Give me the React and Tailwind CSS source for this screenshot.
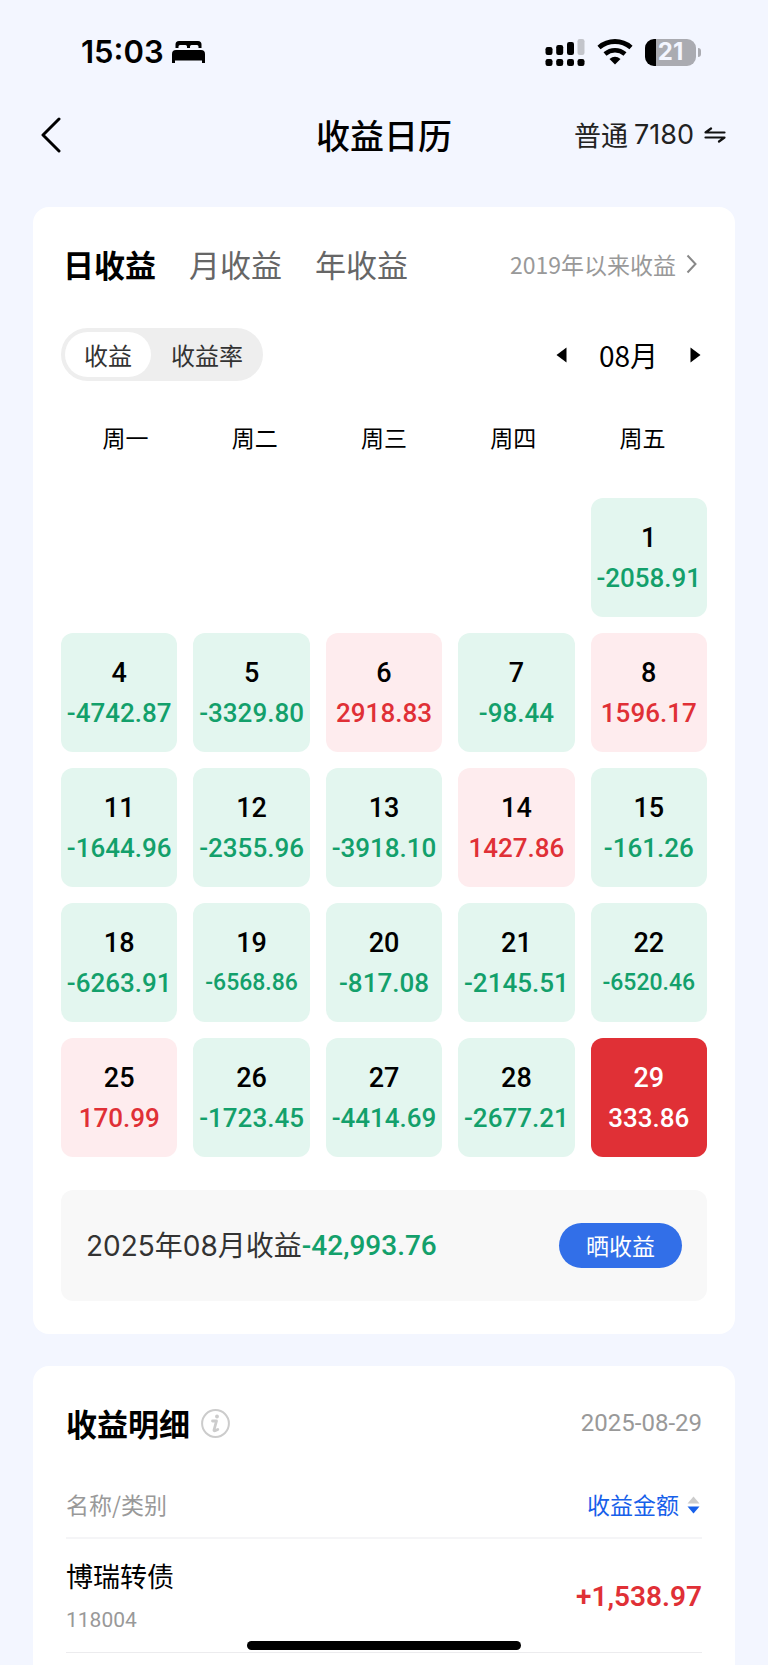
import React, { useState } from 'react';

const WEEKDAYS = ['周一', '周二', '周三', '周四', '周五'];

const DAYS = [
  { day: 1, amount: '-2058.91' },
  { day: 4, amount: '-4742.87' },
  { day: 5, amount: '-3329.80' },
  { day: 6, amount: '2918.83' },
  { day: 7, amount: '-98.44' },
  { day: 8, amount: '1596.17' },
  { day: 11, amount: '-1644.96' },
  { day: 12, amount: '-2355.96' },
  { day: 13, amount: '-3918.10' },
  { day: 14, amount: '1427.86' },
  { day: 15, amount: '-161.26' },
  { day: 18, amount: '-6263.91' },
  { day: 19, amount: '-6568.86', small: true },
  { day: 20, amount: '-817.08' },
  { day: 21, amount: '-2145.51' },
  { day: 22, amount: '-6520.46', small: true },
  { day: 25, amount: '170.99' },
  { day: 26, amount: '-1723.45' },
  { day: 27, amount: '-4414.69' },
  { day: 28, amount: '-2677.21' },
  { day: 29, amount: '333.86' },
];

const ROWS = [{ name: '博瑞转债', code: '118004', amount: '+1,538.97' }];

const TABS = ['日收益', '月收益', '年收益'];

function StatusBar() {
  return (
    <div className="flex h-[104px] items-center justify-between pl-[81px] pr-[67px]">
      <div className="flex items-center gap-2">
        <span className="font-['Inter',sans-serif] text-[31px] font-semibold leading-10">15:03</span>
        <svg width="33" height="24" viewBox="0 0 33 24" aria-hidden="true">
          <path d="M3.5 8V4.5Q3.5 1 7 1H26Q29.500 1 29.500 4.500V8H26.500V6.500Q26.500 5 25 5H19.500Q18 5 18 6.500V8H15V6.500Q15 5 13.500 5H8Q6.500 5 6.500 6.500V8Z" />
          <path d="M0 23V14Q0 10 4 10H29Q33 10 33 14V23H30V20.500H3V23Z" />
        </svg>
      </div>
      <div className="flex items-center gap-3">
        <svg width="40" height="28" viewBox="0 0 40 28" aria-hidden="true">
          <rect x="0.500" y="9" width="7" height="8" rx="2.200" />
          <rect x="11.200" y="7" width="7" height="10" rx="2.200" />
          <rect x="22" y="4" width="7" height="13" rx="2.200" />
          <rect x="32.500" y="1" width="7" height="16" rx="2.200" fill="#c3c5cb" />
          <rect x="0.500" y="21" width="7" height="7" rx="2.200" />
          <rect x="11.200" y="21" width="7" height="7" rx="2.200" />
          <rect x="22" y="21" width="7" height="7" rx="2.200" />
          <rect x="32.500" y="21" width="7" height="7" rx="2.200" />
        </svg>
        <svg width="36" height="26" viewBox="0 0 36 26" fill="none" stroke="#000" aria-hidden="true">
          <path d="M2 8.500Q9 2.500 18 2.500Q27 2.500 34 8.500" strokeWidth="4.800" />
          <path d="M8 15Q12.500 11.200 18 11.200Q23.500 11.200 28 15" strokeWidth="4.600" />
          <path d="M12.500 20Q18 15.500 23.500 20L18 25.500Z" fill="#000" stroke="none" />
        </svg>
        <div className="flex items-center gap-[2px]">
          <div className="flex h-[27px] w-[51px] items-center justify-center rounded-[9px] bg-[linear-gradient(to_right,#000_11px,#aaabb1_11px)] font-['Inter',sans-serif] text-2xl font-bold text-[#f3f6ff]">
            21
          </div>
          <div className="h-[9px] w-[3px] rounded-r-full bg-[#aaabb1]" />
        </div>
      </div>
    </div>
  );
}

function NavBar() {
  return (
    <header className="grid h-[62px] grid-cols-[1fr_auto_1fr] items-center px-10">
      <button aria-label="返回" className="w-6">
        <svg width="22" height="36" viewBox="0 0 22 36" fill="none" stroke="#000" strokeWidth="3" strokeLinecap="round" strokeLinejoin="round" aria-hidden="true">
          <path d="M19 2L3 18L19 34" />
        </svg>
      </button>
      <h1 className="text-[34px] font-medium leading-10">收益日历</h1>
      <button className="flex items-center gap-[10px] justify-self-end pr-[2px] text-[27px] leading-10 text-[#222]">
        <span className="flex items-center gap-[6px]">
          普通<span className="font-['Inter',sans-serif]">7180</span>
        </span>
        <svg width="22" height="16" viewBox="0 0 22 16" fill="none" stroke="#111" strokeWidth="2.200" strokeLinecap="round" strokeLinejoin="round" aria-hidden="true">
          <path d="M20.500 5.500H1.500L7 1.500" />
          <path d="M1.500 10.500H20.500L15 14.500" />
        </svg>
      </button>
    </header>
  );
}

function DayCell({ item, selected, onSelect }) {
  const loss = item.amount.startsWith('-');
  const bg = selected ? 'bg-[#e03036]' : loss ? 'bg-[#e3f6ef]' : 'bg-[#feecee]';
  const color = selected ? 'text-white' : loss ? 'text-[#13a06b]' : 'text-[#e03036]';

  return (
    <button
      onClick={() => onSelect(item.day)}
      className={`flex h-[119px] flex-col items-center justify-center rounded-xl font-['Roboto',sans-serif] font-medium ${bg} ${item.day === 1 ? 'col-start-5' : ''}`}
    >
      <span className={`text-[27px] leading-10 ${selected ? 'text-white' : 'text-black'}`}>{item.day}</span>
      <span className={`leading-10 ${item.small ? 'text-[23px]' : 'text-[26px]'} ${color}`}>{item.amount}</span>
    </button>
  );
}

export default function App() {
  const [tab, setTab] = useState('日收益');
  const [mode, setMode] = useState('收益');
  const [selectedDay, setSelectedDay] = useState(29);

  return (
    <div className="flex min-h-screen flex-col bg-[#f3f6ff] font-['Noto_Sans_CJK_SC',sans-serif] text-black">
      <StatusBar />
      <NavBar />

      <main className="flex flex-1 flex-col gap-8 px-[33px] pt-[41px]">
        {/* 收益日历 */}
        <section className="rounded-2xl bg-white px-7 pb-[33px] pt-[33px]">
          <div className="flex h-12 items-center justify-between pl-[2px]">
            <div className="flex gap-[33px]">
              {TABS.map((name) => (
                <button
                  key={name}
                  onClick={() => setTab(name)}
                  className={`text-[31px] leading-10 ${tab === name ? 'font-bold text-black' : 'text-[#666]'}`}
                >
                  {name}
                </button>
              ))}
            </div>
            <a href="#history" className="flex items-center gap-[10px] pr-[10px] text-[23px] leading-10 text-[#999]">
              2019年以来收益
              <svg width="11" height="20" viewBox="0 0 11 20" fill="none" stroke="#888" strokeWidth="2" aria-hidden="true">
                <path d="M1.500 1.500L9.500 10L1.500 18.500" />
              </svg>
            </a>
          </div>

          <div className="mt-10 flex h-[53px] items-center justify-between">
            <div className="flex h-full rounded-full bg-[#eee] p-1 text-[24px] text-[#333]">
              <button onClick={() => setMode('收益')} className={`rounded-full px-[19px] ${mode === '收益' ? 'bg-white' : ''}`}>收益</button>
              <button onClick={() => setMode('收益率')} className={`rounded-full pl-5 pr-4 ${mode === '收益率' ? 'bg-white' : ''}`}>收益率</button>
            </div>
            <div className="flex items-center gap-8 pr-[6px]">
              <button aria-label="上个月">
                <svg width="11" height="16" viewBox="0 0 11 16" aria-hidden="true">
                  <path d="M10.500 0.500V15.500L0.500 8Z" />
                </svg>
              </button>
              <span className="text-[28px] leading-10">08月</span>
              <button aria-label="下个月">
                <svg width="11" height="16" viewBox="0 0 11 16" aria-hidden="true">
                  <path d="M0.500 0.500V15.500L10.500 8Z" />
                </svg>
              </button>
            </div>
          </div>

          <div className="mt-9 grid grid-cols-5 text-center text-[23px] leading-10">
            {WEEKDAYS.map((name) => (
              <span key={name}>{name}</span>
            ))}
          </div>

          <div className="mt-[41px] grid grid-cols-5 gap-4">
            {DAYS.map((item) => (
              <DayCell key={item.day} item={item} selected={item.day === selectedDay} onSelect={setSelectedDay} />
            ))}
          </div>

          <div className="mt-[33px] flex h-[111px] items-center justify-between rounded-xl bg-[#f8f8f8] px-[25px]">
            <p className="flex items-center text-[28px] leading-10 text-[#333]">
              <span className="font-['Inter','Noto_Sans_CJK_SC',sans-serif]">2025年08月收益</span>
              <span className="font-['Roboto',sans-serif] font-medium text-[#13a06b]">-42,993.76</span>
            </p>
            <button className="h-[45px] rounded-full bg-[#326fe8] px-[27px] text-[23px] text-white">晒收益</button>
          </div>
        </section>

        {/* 收益明细 */}
        <section className="flex-1 rounded-t-2xl bg-white px-[33px] pt-[33px]">
          <div className="flex h-12 items-center justify-between">
            <div className="flex items-center gap-[11px]">
              <h2 className="text-[31px] font-bold leading-10">收益明细</h2>
              <button aria-label="说明">
                <svg width="29" height="29" viewBox="0 0 29 29" fill="none" stroke="#ccc" aria-hidden="true">
                  <circle cx="14.500" cy="14.500" r="13.400" strokeWidth="2" />
                  <circle cx="16" cy="7.500" r="1.900" fill="#ccc" stroke="none" />
                  <path d="M11.500 12H15.500L13 21Q12.800 22 14 21.700L16.800 20.500" strokeWidth="2.800" strokeLinecap="round" strokeLinejoin="round" />
                </svg>
              </button>
            </div>
            <time className="font-['Roboto',sans-serif] text-[24px] leading-10 text-[#999]">2025-08-29</time>
          </div>

          <table className="mt-[25px] w-full">
            <thead>
              <tr className="h-[66px] border-b-2 border-[#f5f5f7] text-[23px]">
                <th className="text-left font-normal text-[#999]">名称/类别</th>
                <th className="font-normal text-[#1760ea]">
                  <button className="ml-auto flex items-center gap-2 pr-[2px]">
                    收益金额
                    <svg width="13" height="18" viewBox="0 0 13 18" aria-hidden="true">
                      <path d="M6.500 0.500L12.500 7.500H0.500Z" fill="#ccc" />
                      <path d="M6.500 17.500L12.500 10.500H0.500Z" fill="#1760ea" />
                    </svg>
                  </button>
                </th>
              </tr>
            </thead>
            <tbody>
              {ROWS.map((row) => (
                <tr key={row.code} className="h-[114px] border-b border-[#ececee]">
                  <td className="pt-[6px]">
                    <div className="text-[27px] leading-[44px]">{row.name}</div>
                    <div className="font-['Roboto',sans-serif] text-[21px] leading-[44px] text-[#999]">{row.code}</div>
                  </td>
                  <td className="pt-1 text-right font-['Roboto',sans-serif] text-[28px] font-semibold text-[#e03036]">{row.amount}</td>
                </tr>
              ))}
            </tbody>
          </table>
        </section>
      </main>

      {/* home indicator */}
      <div className="fixed bottom-[15px] left-1/2 h-[9px] w-[274px] -translate-x-1/2 rounded-full bg-black" />
    </div>
  );
}
